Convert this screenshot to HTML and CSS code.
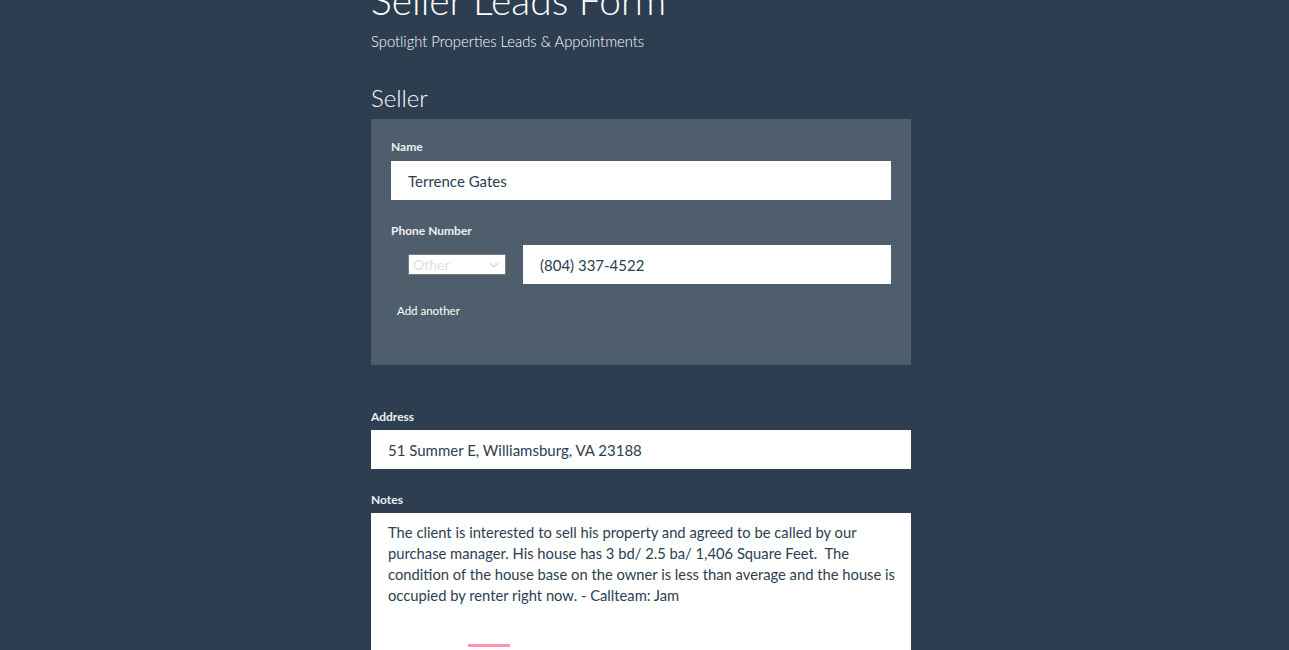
FILE: index.html
```html
<!DOCTYPE html>
<html>
<head>
<meta charset="utf-8">
<link rel="stylesheet" href="styles.css">
</head>
<body>
<div class="page">
  <h1 class="title">Seller Leads Form</h1>
  <p class="subtitle">Spotlight Properties Leads &amp; Appointments</p>
  <h2 class="section">Seller</h2>
  <div class="panel">
    <div class="field">
      <label class="label">Name</label>
      <div class="input">Terrence Gates</div>
    </div>
    <div class="field phone-field">
      <label class="label">Phone Number</label>
      <div class="phone-row">
        <div class="select">
          <span>Other</span>
          <svg class="chev" width="10" height="6" viewBox="0 0 10 6"><path d="M1 1l4 4 4-4" fill="none" stroke="#d6d6d6" stroke-width="1.3"/></svg>
        </div>
        <div class="input phone-input">(804) 337-4522</div>
      </div>
    </div>
    <a class="add">Add another</a>
  </div>
  <div class="field outer address">
    <label class="label">Address</label>
    <div class="input">51 Summer E, Williamsburg, VA 23188</div>
  </div>
  <div class="field outer notes">
    <label class="label">Notes</label>
    <div class="textarea">The client is interested to sell his property and agreed to be called by our purchase manager. His house has 3 bd/ 2.5 ba/ 1,406 Square Feet.&nbsp; The condition of the house base on the owner is less than average and the house is occupied by renter right now. - Callteam: Jam<span class="pink"></span></div>
  </div>
</div>
</body>
</html>
```

FILE: styles.css
```css
html, body {
  margin: 0;
  padding: 0;
  background: #2c3e50;
  height: 100%;
  overflow: hidden;
}
body {
  font-family: Lato, "Open Sans", sans-serif;
  color: #ffffff;
}
.page {
  width: 540px;
  margin-left: 371px;
  margin-top: -22px;
}
.title {
  font-weight: 300;
  font-size: 39px;
  line-height: 44px;
  margin: 0;
}
.subtitle {
  font-weight: 300;
  font-size: 14.8px;
  line-height: 20px;
  margin: 9px 0 0 0;
}
.section {
  font-weight: 300;
  font-size: 24px;
  line-height: 30px;
  margin: 32px 0 0 0;
}
.panel {
  margin-top: 6px;
  background: #4f5e6d;
  padding: 21px 20px 47px 20px;
  display: flex;
  flex-direction: column;
}
.field {
  display: flex;
  flex-direction: column;
}
.label {
  font-weight: 700;
  font-size: 12px;
  line-height: 14px;
  color: #ecf0f1;
  margin-bottom: 7px;
}
.input {
  background: #ffffff;
  color: #2c3e50;
  height: 39px;
  line-height: 41px;
  font-size: 15px;
  padding-left: 17px;
  box-sizing: border-box;
}
.phone-field {
  margin-top: 24px;
}
.phone-row {
  display: flex;
  align-items: center;
  padding-left: 17px;
  gap: 17px;
}
.select {
  width: 98px;
  height: 21px;
  box-sizing: border-box;
  border: 1px solid #7b7b7b;
  background: #fff;
  color: #e0e0e0;
  font-size: 14px;
  display: flex;
  align-items: center;
  justify-content: space-between;
  padding: 0 6px 0 4px;
  flex: none;
}
.chev {
  display: block;
}
.phone-input {
  flex: 1;
}
.add {
  font-size: 11.5px;
  font-weight: 400;
  color: #ffffff;
  margin-top: 20px;
  margin-left: 6px;
  line-height: 14px;
}
.address {
  margin-top: 45px;
}
.notes {
  margin-top: 24px;
}
.address .label {
  margin-bottom: 6px;
}
.notes .label {
  margin-bottom: 6px;
}
.textarea {
  background: #ffffff;
  color: #2c3e50;
  font-size: 14.75px;
  line-height: 21px;
  padding: 9px 12px 0 17px;
  height: 200px;
  box-sizing: border-box;
  position: relative;
}
.pink {
  position: absolute;
  left: 97px;
  top: 131px;
  width: 42px;
  height: 3px;
  background: #ff94a8;
}
```
